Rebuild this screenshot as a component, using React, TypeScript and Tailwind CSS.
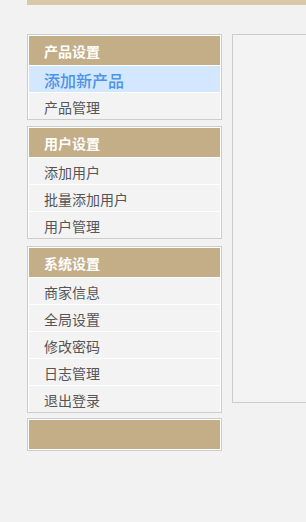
import React from "react";

const font = { fontFamily: '"Noto Sans CJK SC", "Noto Sans", sans-serif' };

function Item({ label, active }: { label: string; active?: boolean }) {
  if (active) {
    return (
      <div className="border-t border-white h-[27px] bg-[#d3e8fe] pl-[15px] pt-[2px] text-[16px] leading-[24px] font-medium text-[#4b93e8]">
        {label}
      </div>
    );
  }
  return (
    <div className="border-t border-white h-[27px] bg-[#f3f3f3] pl-[15px] pt-[2px] text-[14px] leading-[24px] text-[#555555]">
      {label}
    </div>
  );
}

function Panel({
  title,
  items,
  active,
  className,
}: {
  title: string;
  items: string[];
  active?: string;
  className?: string;
}) {
  return (
    <div className={"border border-[#cccccc] bg-white pt-px px-px " + (className ?? "")}>
      <div className="h-[29px] bg-[#c4ae88] pl-[15px] pt-[1px] text-[14px] leading-[29px] font-bold text-white">
        {title}
      </div>
      {items.map((it) => (
        <Item key={it} label={it} active={it === active} />
      ))}
    </div>
  );
}

export default function App() {
  return (
    <div className="w-[306px] h-[522px] overflow-hidden bg-[#f2f2f2]" style={font}>
      <div className="pl-[27px]">
        <div className="h-[5px] bg-[#d8c8a8]" />
        <div className="flex mt-[29px] items-start">
          <div className="w-[195px] shrink-0">
            <Panel title="产品设置" items={["添加新产品", "产品管理"]} active="添加新产品" />
            <Panel
              className="mt-[6px]"
              title="用户设置"
              items={["添加用户", "批量添加用户", "用户管理"]}
            />
            <Panel
              className="mt-[7px]"
              title="系统设置"
              items={["商家信息", "全局设置", "修改密码", "日志管理", "退出登录"]}
            />
            <div className="mt-[5px] border border-[#cccccc] bg-white p-px">
              <div className="h-[29px] bg-[#c4ae88]" />
            </div>
          </div>
          <div className="ml-[10px] w-[400px] h-[369px] shrink-0 border border-[#cccccc] bg-[#f3f3f3]" />
        </div>
      </div>
    </div>
  );
}
